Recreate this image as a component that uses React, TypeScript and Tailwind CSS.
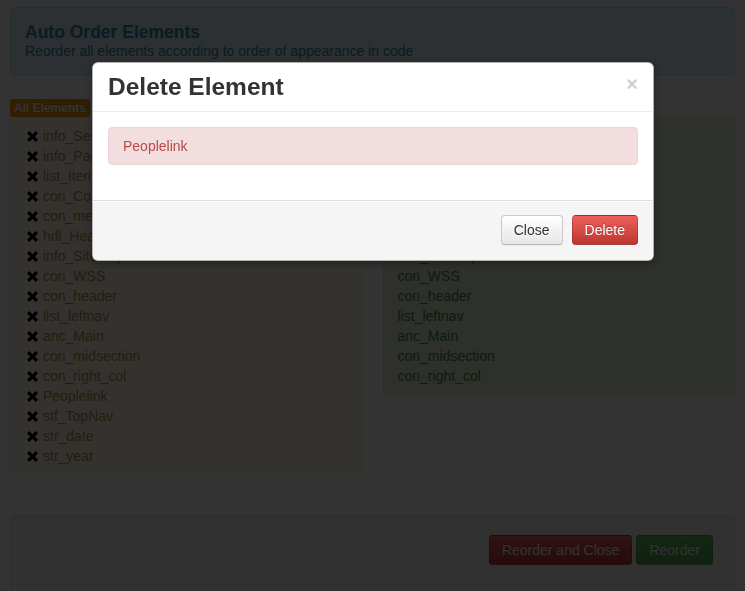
import React from "react";

const leftItems = [
  "info_SessionId",
  "info_PageTitle",
  "list_Items",
  "con_Content",
  "con_menu",
  "hdl_Header",
  "info_SitemapName",
  "con_WSS",
  "con_header",
  "list_leftnav",
  "anc_Main",
  "con_midsection",
  "con_right_col",
  "Peoplelink",
  "stf_TopNav",
  "str_date",
  "str_year",
];

const rightItems = [
  "info_SessionId",
  "info_PageTitle",
  "list_Items",
  "con_Content",
  "con_menu",
  "hdl_Header",
  "info_SitemapName",
  "con_WSS",
  "con_header",
  "list_leftnav",
  "anc_Main",
  "con_midsection",
  "con_right_col",
];

function RemoveIcon() {
  return (
    <svg width="11" height="11" viewBox="0 0 11 11" className="block">
      <path
        d="M2.3 0 L5.5 3.2 L8.7 0 L11 2.3 L7.8 5.5 L11 8.7 L8.7 11 L5.5 7.8 L2.3 11 L0 8.7 L3.2 5.5 L0 2.3 Z"
        fill="#000"
      />
    </svg>
  );
}

export default function App() {
  return (
    <div
      className="relative min-h-screen bg-white text-[14px] text-[#333]"
      style={{ fontFamily: '"Liberation Sans", Helvetica, Arial, sans-serif' }}
    >
      <div className="px-[10px] pt-[7px]">
        {/* Header alert */}
        <div className="rounded-[4px] border border-[#bce8f1] bg-[#d9edf7] px-[14px] py-[14px] text-[#3a87ad]">
          <div className="text-[17.5px] font-bold leading-[20px]">Auto Order Elements</div>
          <div className="text-[14px] leading-[19px]">
            Reorder all elements according to order of appearance in code
          </div>
        </div>

        {/* Columns */}
        <div className="mt-[23px] grid grid-cols-2 gap-x-[20px]">
          <div>
            <div className="flex h-[18px]">
              <span className="flex items-center rounded-[3px] bg-[#f89406] px-[4px] text-[12px] font-bold leading-[14px] text-white [text-shadow:0_-1px_0_rgba(0,0,0,0.25)]">
                All Elements
              </span>
            </div>
            <div className="rounded-[4px] border border-[#fbeed5] bg-[#fcf8e3] py-[8px] pl-[16px] text-[#b88f4d]">
              {leftItems.map((it) => (
                <div key={it} className="flex h-[20px] items-center leading-[20px]">
                  <span className="flex w-[16px] items-center">
                    <RemoveIcon />
                  </span>
                  <span>{it}</span>
                </div>
              ))}
            </div>
          </div>
          <div>
            <div className="flex h-[18px]">
              <span className="flex items-center rounded-[3px] bg-[#468847] px-[4px] text-[12px] font-bold leading-[14px] text-white">
                Ordered Elements
              </span>
            </div>
            <div className="rounded-[4px] border border-[#d6e9c6] bg-[#dff0d8] py-[8px] pl-[14px] text-[#468847]">
              {rightItems.map((it) => (
                <div key={it} className="h-[20px] leading-[20px]">
                  {it}
                </div>
              ))}
            </div>
          </div>
        </div>

        {/* Well */}
        <div className="mt-[40px] rounded-[4px] border border-[#e3e3e3] bg-[#f5f5f5] pb-[30px] pl-[19px] pr-[21px] pt-[19px] text-right shadow-[inset_0_1px_1px_rgba(0,0,0,0.05)]">
          <div className="flex justify-end gap-[4px]">
            <button className="rounded-[4px] border border-[rgba(0,0,0,0.15)] bg-gradient-to-b from-[#ee5f5b] to-[#bd362f] px-[12px] py-[4px] text-[14px] leading-[20px] text-white [text-shadow:0_-1px_0_rgba(0,0,0,0.25)]">
              Reorder and Close
            </button>
            <button className="rounded-[4px] border border-[rgba(0,0,0,0.15)] bg-gradient-to-b from-[#62c462] to-[#51a351] px-[12px] py-[4px] text-[14px] leading-[20px] text-white [text-shadow:0_-1px_0_rgba(0,0,0,0.25)]">
              Reorder
            </button>
          </div>
        </div>
      </div>

      {/* Backdrop */}
      <div className="fixed inset-0 bg-black/80" />

      {/* Modal */}
      <div className="absolute left-[92px] top-[62px] w-[562px] overflow-hidden rounded-[6px] border border-[rgba(0,0,0,0.3)] bg-white shadow-[0_3px_7px_rgba(0,0,0,0.3)]">
        <div className="flex items-start justify-between border-b border-[#eeeeee] px-[15px] py-[9px]">
          <h3 className="text-[24.5px] font-bold leading-[30px] text-[#333]">Delete Element</h3>
          <span className="mt-[2px] text-[20px] font-bold leading-[20px] text-black/20 [text-shadow:0_1px_0_#fff]">
            ×
          </span>
        </div>
        <div className="p-[15px]">
          <div className="mb-[20px] rounded-[4px] border border-[#eed3d7] bg-[#f2dede] py-[8px] pl-[14px] pr-[35px] leading-[20px] text-[#b94a48]">
            Peoplelink
          </div>
        </div>
        <div className="flex justify-end gap-[9px] border-t border-[#dddddd] bg-[#f5f5f5] px-[15px] pb-[15px] pt-[14px] shadow-[inset_0_1px_0_#ffffff]">
          <button className="rounded-[4px] border border-[#cccccc] border-b-[#b3b3b3] bg-gradient-to-b from-[#ffffff] to-[#e6e6e6] px-[12px] py-[4px] text-[14px] leading-[20px] text-[#333] shadow-[inset_0_1px_0_rgba(255,255,255,0.2),0_1px_2px_rgba(0,0,0,0.05)] [text-shadow:0_1px_1px_rgba(255,255,255,0.75)]">
            Close
          </button>
          <button className="rounded-[4px] border border-[rgba(0,0,0,0.15)] border-b-[rgba(0,0,0,0.3)] bg-gradient-to-b from-[#ee5f5b] to-[#bd362f] px-[12px] py-[4px] text-[14px] leading-[20px] text-white [text-shadow:0_-1px_0_rgba(0,0,0,0.25)]">
            Delete
          </button>
        </div>
      </div>
    </div>
  );
}
